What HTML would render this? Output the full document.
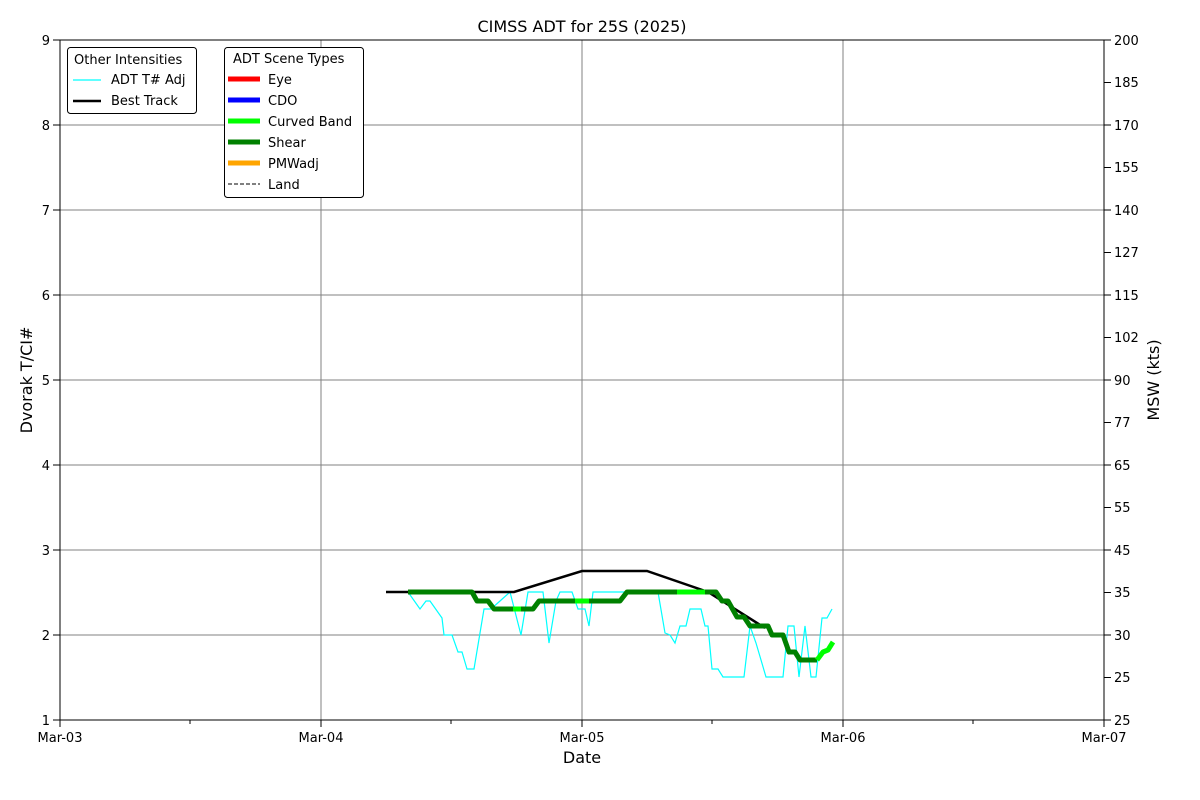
<!DOCTYPE html><html><head><style>body{margin:0;background:#fff}svg{display:block;font-family:"DejaVu Sans","Liberation Sans",sans-serif}</style></head><body>
<svg width="1200" height="800" viewBox="0 0 1200 800" xmlns="http://www.w3.org/2000/svg">
<rect width="1200" height="800" fill="#fff"/>
<g stroke="#808080" stroke-width="1">
<line x1="60" y1="125" x2="1104" y2="125"/><line x1="60" y1="210" x2="1104" y2="210"/><line x1="60" y1="295" x2="1104" y2="295"/><line x1="60" y1="380" x2="1104" y2="380"/><line x1="60" y1="465" x2="1104" y2="465"/><line x1="60" y1="550" x2="1104" y2="550"/><line x1="60" y1="635" x2="1104" y2="635"/>
<line x1="321" y1="40" x2="321" y2="720"/><line x1="582" y1="40" x2="582" y2="720"/><line x1="843" y1="40" x2="843" y2="720"/>
</g>
<polyline fill="none" stroke="#00ffff" stroke-width="1.2" points="408,592 420,609 426,601 430,601 442,618 444,635 452,635 458,652 462,652 467,669 474,669 484,609 491,609 500,601 510,592 521,635 528,592 543,592 549,643 556,601 560,592 572,592 578,609 585,609 589,626 593,592 658,592 665,633 670,635 675,643 680,626 686,626 690,609 701,609 705,626 708,626 712,669 718,669 723,677 744,677 750,626 756,643 766,677 783,677 788,626 794,626 799,677 805,626 811,677 816,677 822,618 827,618 832,609"/>
<polyline fill="none" stroke="#000" stroke-width="2.5" points="386,592 514,592 582,571 647,571 708,592 765,628"/>
<polyline fill="none" stroke="#008000" stroke-width="5" stroke-linejoin="round" points="408,592 472,592 477,601 488,601 494,609 533,609 539,601 575,601 620,601 627,592 677,592"/>
<polyline fill="none" stroke="#008000" stroke-width="5" stroke-linejoin="round" points="705,592 716,592 722,601 728,601 737,617 744,617 750,626 768,626 772,635 783,635 789,652 795,652 800,660 817,660"/>
<g stroke="#00ff00" stroke-width="5" fill="none" stroke-linejoin="round"><line x1="513" y1="609" x2="521" y2="609"/><line x1="575" y1="601" x2="589" y2="601"/><line x1="677" y1="592" x2="705" y2="592"/><polyline points="817,660 823,652 828,650 833,642"/></g>
<rect x="60" y="40" width="1044" height="680" fill="none" stroke="#000" stroke-width="1"/>
<g stroke="#000"><line x1="60" y1="720" x2="60" y2="727"/><line x1="321" y1="720" x2="321" y2="727"/><line x1="582" y1="720" x2="582" y2="727"/><line x1="843" y1="720" x2="843" y2="727"/><line x1="1104" y1="720" x2="1104" y2="727"/>
<line x1="190" y1="720" x2="190" y2="724"/><line x1="451" y1="720" x2="451" y2="724"/><line x1="712" y1="720" x2="712" y2="724"/><line x1="973" y1="720" x2="973" y2="724"/>
<line x1="53" y1="40" x2="60" y2="40"/><line x1="53" y1="125" x2="60" y2="125"/><line x1="53" y1="210" x2="60" y2="210"/><line x1="53" y1="295" x2="60" y2="295"/><line x1="53" y1="380" x2="60" y2="380"/><line x1="53" y1="465" x2="60" y2="465"/><line x1="53" y1="550" x2="60" y2="550"/><line x1="53" y1="635" x2="60" y2="635"/><line x1="53" y1="720" x2="60" y2="720"/>
<line x1="1104" y1="40" x2="1111" y2="40"/><line x1="1104" y1="82.5" x2="1111" y2="82.5"/><line x1="1104" y1="125" x2="1111" y2="125"/><line x1="1104" y1="167.5" x2="1111" y2="167.5"/><line x1="1104" y1="210" x2="1111" y2="210"/><line x1="1104" y1="252.5" x2="1111" y2="252.5"/><line x1="1104" y1="295" x2="1111" y2="295"/><line x1="1104" y1="337.5" x2="1111" y2="337.5"/><line x1="1104" y1="380" x2="1111" y2="380"/><line x1="1104" y1="422.5" x2="1111" y2="422.5"/><line x1="1104" y1="465" x2="1111" y2="465"/><line x1="1104" y1="507.5" x2="1111" y2="507.5"/><line x1="1104" y1="550" x2="1111" y2="550"/><line x1="1104" y1="592.5" x2="1111" y2="592.5"/><line x1="1104" y1="635" x2="1111" y2="635"/><line x1="1104" y1="677.5" x2="1111" y2="677.5"/><line x1="1104" y1="720" x2="1111" y2="720"/></g>
<g font-size="13" fill="#000">
<g text-anchor="end"><text x="50" y="45">9</text><text x="50" y="130">8</text><text x="50" y="215">7</text><text x="50" y="300">6</text><text x="50" y="385">5</text><text x="50" y="470">4</text><text x="50" y="555">3</text><text x="50" y="640">2</text><text x="50" y="725">1</text></g>
<g text-anchor="start"><text x="1114" y="45">200</text><text x="1114" y="87">185</text><text x="1114" y="130">170</text><text x="1114" y="172">155</text><text x="1114" y="215">140</text><text x="1114" y="257">127</text><text x="1114" y="300">115</text><text x="1114" y="342">102</text><text x="1114" y="385">90</text><text x="1114" y="427">77</text><text x="1114" y="470">65</text><text x="1114" y="512">55</text><text x="1114" y="555">45</text><text x="1114" y="597">35</text><text x="1114" y="640">30</text><text x="1114" y="682">25</text><text x="1114" y="725">25</text></g>
<g text-anchor="middle"><text x="60" y="742">Mar-03</text><text x="321" y="742">Mar-04</text><text x="582" y="742">Mar-05</text><text x="843" y="742">Mar-06</text><text x="1104" y="742">Mar-07</text></g>
</g>
<text x="582" y="32" font-size="16" text-anchor="middle">CIMSS ADT for 25S (2025)</text>
<text x="582" y="763" font-size="16" text-anchor="middle">Date</text>
<text transform="translate(32,380) rotate(-90)" font-size="16" text-anchor="middle">Dvorak T/CI#</text>
<text transform="translate(1159,380) rotate(-90)" font-size="16" text-anchor="middle">MSW (kts)</text>
<g font-size="13">
<rect x="67.5" y="47.5" width="129" height="66" rx="3" fill="#fff" stroke="#000"/>
<text x="74" y="64">Other Intensities</text>
<line x1="73" y1="80" x2="101" y2="80" stroke="#00ffff" stroke-width="1.2"/><text x="111" y="84">ADT T# Adj</text>
<line x1="73" y1="101" x2="101" y2="101" stroke="#000" stroke-width="2.5"/><text x="111" y="105">Best Track</text>
<rect x="224.5" y="47.5" width="139" height="150" rx="3" fill="#fff" stroke="#000"/>
<text x="233" y="63">ADT Scene Types</text>
<line x1="228" y1="79" x2="260" y2="79" stroke="#ff0000" stroke-width="5"/><text x="268" y="84">Eye</text>
<line x1="228" y1="100" x2="260" y2="100" stroke="#0000ff" stroke-width="5"/><text x="268" y="105">CDO</text>
<line x1="228" y1="121" x2="260" y2="121" stroke="#00ff00" stroke-width="5"/><text x="268" y="126">Curved Band</text>
<line x1="228" y1="142" x2="260" y2="142" stroke="#008000" stroke-width="5"/><text x="268" y="147">Shear</text>
<line x1="228" y1="163" x2="260" y2="163" stroke="#ffa500" stroke-width="5"/><text x="268" y="168">PMWadj</text>
<line x1="228" y1="184" x2="260" y2="184" stroke="#000" stroke-width="1" stroke-dasharray="4,2"/><text x="268" y="189">Land</text>
</g>
</svg></body></html>
